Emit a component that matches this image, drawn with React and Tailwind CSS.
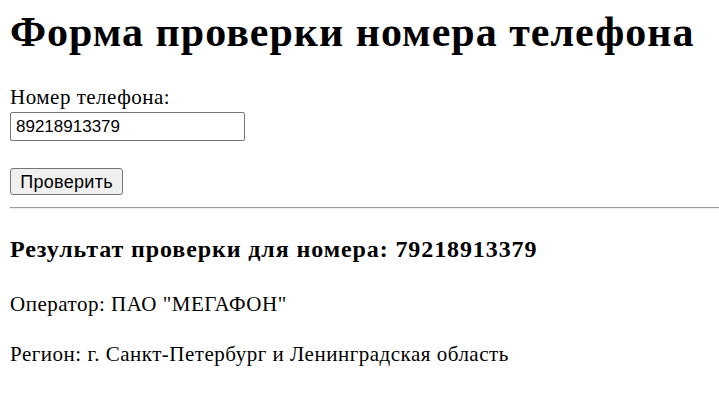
export default function App() {
  return (
    <div className="min-h-[403px] w-[719px] bg-white text-black font-['Liberation_Serif','Times_New_Roman',serif] overflow-hidden">
      <div className="flex flex-col pl-[10px]">
        <h1 className="mt-[9px] text-[42px] leading-[46px] tracking-[1px] font-bold whitespace-nowrap">Форма проверки номера телефона</h1>
        <form className="flex flex-col items-start">
          <label className="mt-[31px] text-[21px] leading-[23px] tracking-[0.5px]">Номер телефона:</label>
          <input
            readOnly
            value="89218913379"
            className="mt-[3px] w-[235px] h-[29px] border border-[#767676] rounded-[2px] px-[5px] text-[17px] font-['Liberation_Sans',Arial,sans-serif] outline-none"
          />
          <button
            type="button"
            className="mt-[27px] w-[113px] h-[27px] border border-[#767676] rounded-[3px] bg-[#efefef] text-[18px] tracking-[0.3px] font-['Liberation_Sans',Arial,sans-serif] leading-none"
          >
            Проверить
          </button>
        </form>
        <hr className="mt-[12px] border-t border-t-[#9a9a9a] border-b border-b-[#eeeeee]" />
        <h3 className="mt-[27px] text-[24px] leading-[27px] tracking-[0.9px] font-bold whitespace-nowrap">Результат проверки для номера: 79218913379</h3>
        <p className="mt-[30px] text-[21px] leading-[23px] tracking-[0.5px] whitespace-nowrap">Оператор: ПАО "МЕГАФОН"</p>
        <p className="mt-[27px] text-[21px] leading-[23px] tracking-[0.5px] whitespace-nowrap">Регион: г. Санкт-Петербург и Ленинградская область</p>
      </div>
    </div>
  );
}
